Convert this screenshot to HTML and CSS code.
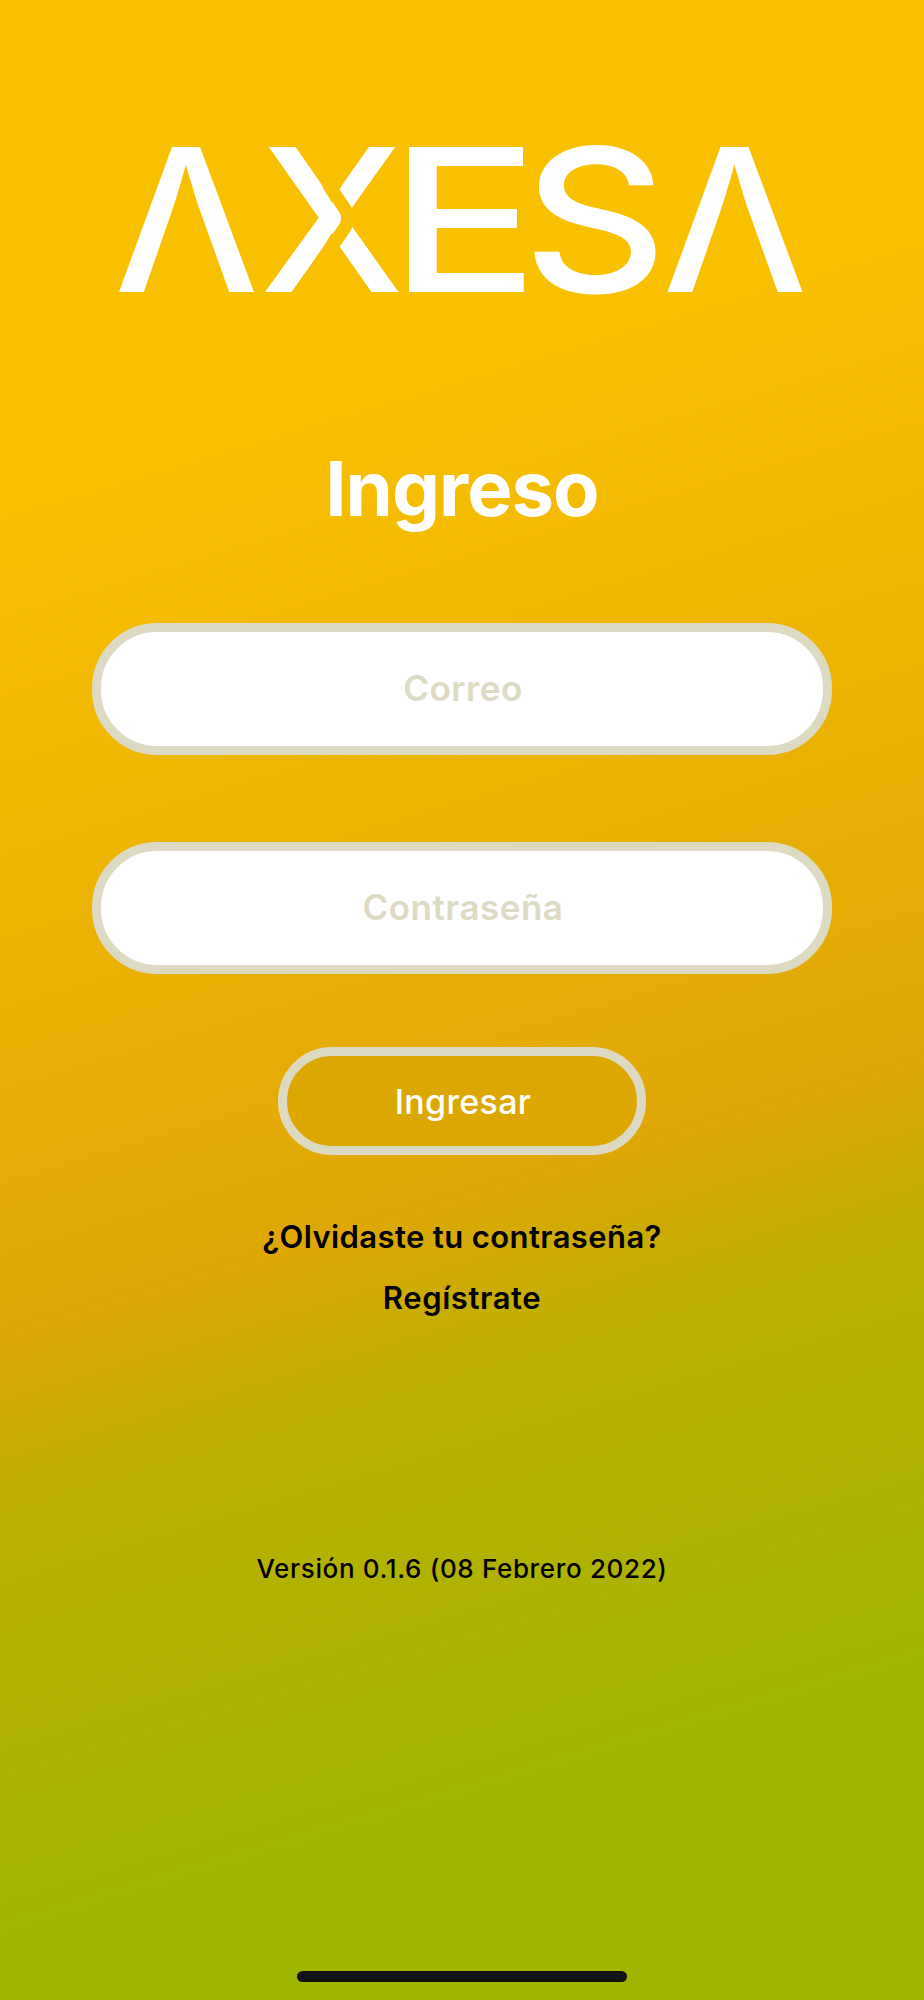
FILE: index.html
```html
<!DOCTYPE html>
<html lang="es">
<head>
<meta charset="utf-8">
<title>Ingreso</title>
<link rel="stylesheet" href="styles.css">
</head>
<body>
<main class="screen">
  <svg class="logo" viewBox="0 0 686 150" role="img" aria-label="AXESA">
    <defs>
      <mask id="cut" maskUnits="userSpaceOnUse" x="130" y="-5" width="165" height="160">
        <rect x="130" y="-5" width="165" height="160" fill="#fff"/>
        <path class="cut-line" d="M209 37 L226 62 Q232 72 225 82 L199 119"/>
      </mask>
    </defs>
    <text class="letter" transform="translate(-5 145)" textLength="145" lengthAdjust="spacingAndGlyphs">Λ</text>
    <g mask="url(#cut)"><text class="letter" transform="translate(140.5 145)" textLength="144.5" lengthAdjust="spacingAndGlyphs">X</text></g>
    <text class="letter" transform="translate(270 145)" textLength="150" lengthAdjust="spacingAndGlyphs">E</text>
    <text class="letter" transform="translate(404 145)" textLength="144" lengthAdjust="spacingAndGlyphs">S</text>
    <text class="letter" transform="translate(543.5 145)" textLength="145" lengthAdjust="spacingAndGlyphs">Λ</text>
  </svg>
  <h1 class="title">Ingreso</h1>
  <form class="form">
    <input class="field" type="email" placeholder="Correo" aria-label="Correo">
    <input class="field" type="password" placeholder="Contraseña" aria-label="Contraseña">
    <button class="submit" type="button">Ingresar</button>
  </form>
  <nav class="links">
    <a class="link forgot">¿Olvidaste tu contraseña?</a>
    <a class="link register">Regístrate</a>
  </nav>
  <p class="version">Versión 0.1.6 (08 Febrero 2022)</p>
  <div class="home-bar"></div>
</main>
</body>
</html>
```
FILE: styles.css
```css
* { box-sizing: border-box; }
body { margin: 0; font-family: Inter, sans-serif; }
.screen {
  height: 2000px;
  display: flex;
  flex-direction: column;
  align-items: center;
  padding: 147px 0 18px;
  background: linear-gradient(163.4deg, #f9c000 22%, #dfa705 58.5%, #bfaf00 65.5%, #a0b500 86%);
}
.logo { width: 686px; height: 150px; overflow: visible; flex: none; }
.letter { font: 500 199.5px Inter, sans-serif; fill: #fff; }
.cut-line { fill: none; stroke: #000; stroke-width: 13; }
.title { margin: 145px 0 0; font-size: 76px; line-height: 92px; font-weight: 700; letter-spacing: -.95px; color: #fff; }
.form { margin-top: 89px; display: flex; flex-direction: column; align-items: center; }
.field {
  width: 740px;
  height: 132px;
  padding: 0 0 2px 2px;
  border: 9px solid #dcdac3;
  border-radius: 65px;
  background: #fff;
  font: 600 35px Inter, sans-serif;
  letter-spacing: .5px;
  text-align: center;
}
.field + .field { margin-top: 87px; }
.field::placeholder { color: #dcdac3; opacity: 1; }
.submit {
  width: 368px;
  height: 108px;
  margin-top: 73px;
  padding: 0 0 0 2px;
  border: 9px solid #dcdac3;
  border-radius: 54px;
  background: #dca800;
  color: #fff;
  font: 500 34px Inter, sans-serif;
  letter-spacing: .3px;
}
.links { margin-top: 52px; display: flex; flex-direction: column; align-items: center; }
.link { font-size: 31px; line-height: 60px; font-weight: 600; letter-spacing: .4px; color: #000; white-space: nowrap; }
.register { line-height: 62px; letter-spacing: .6px; }
.version { margin: 222px 0 0; font-size: 26px; line-height: 36px; font-weight: 450; letter-spacing: .65px; color: #000; }
.home-bar { width: 330px; height: 11px; margin-top: auto; border-radius: 6px; background: #121212; }
```
